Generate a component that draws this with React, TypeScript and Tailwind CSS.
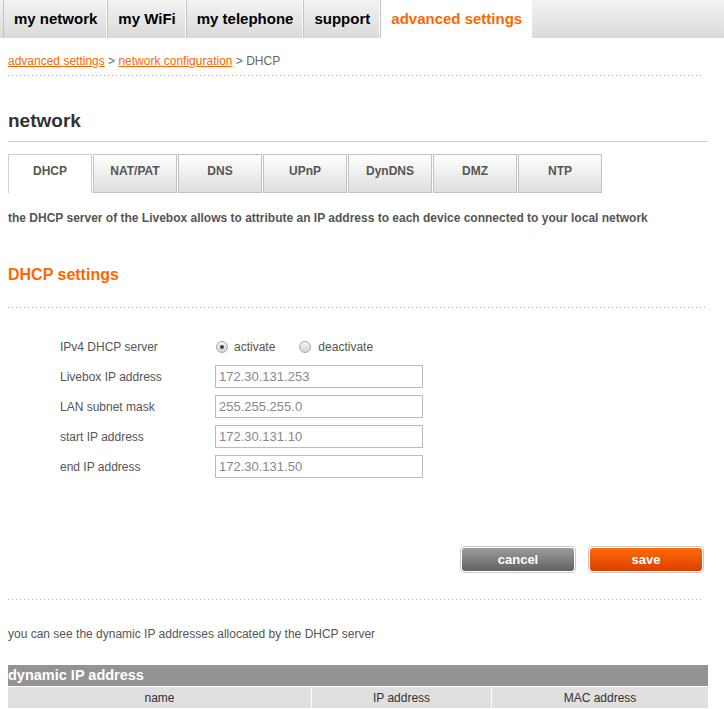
import React from "react";

const mainTabs = ["my network", "my WiFi", "my telephone", "support"];
const subTabs = ["DHCP", "NAT/PAT", "DNS", "UPnP", "DynDNS", "DMZ", "NTP"];

const fields = [
  { label: "Livebox IP address", value: "172.30.131.253" },
  { label: "LAN subnet mask", value: "255.255.255.0" },
  { label: "start IP address", value: "172.30.131.10" },
  { label: "end IP address", value: "172.30.131.50" },
];

const Dots = ({ className = "" }: { className?: string }) => (
  <div
    className={`h-px bg-[linear-gradient(to_right,#f0a070_1px,transparent_1px)] bg-[length:4px_1px] ${className}`}
  />
);

const Radio = ({ checked }: { checked?: boolean }) => (
  <span className="w-[12px] h-[12px] rounded-full border border-[#a8a8a8] bg-gradient-to-b from-[#f4f4f4] to-[#d4d4d4] flex items-center justify-center">
    {checked && <span className="w-[4px] h-[4px] rounded-full bg-[#444]" />}
  </span>
);

export default function App() {
  return (
    <div className="w-[724px] min-h-[709px] bg-white font-['Liberation_Sans',Arial,sans-serif] overflow-hidden">
      {/* top menu */}
      <nav className="flex h-[38px] bg-gradient-to-b from-[#f3f3f3] to-[#dadada]">
        <div className="flex ml-[3px] border-l border-[#c4c4c4]">
          {mainTabs.map((t) => (
            <div
              key={t}
              className="px-[10px] flex items-center text-[15px] font-bold text-black border-r border-[#c4c4c4] shadow-[inset_-1px_0_0_#fafafa]"
            >
              {t}
            </div>
          ))}
          <div className="w-[151px] bg-white flex items-center justify-center text-[15px] font-bold text-[#ff6600]">
            advanced settings
          </div>
        </div>
      </nav>

      <div className="px-[8px] w-[716px]">
        {/* breadcrumb */}
        <div className="mt-[16px] text-[12px] leading-[14px] text-[#666]">
          <span className="text-[#ff6600] underline">advanced settings</span>
          {" > "}
          <span className="text-[#ff6600] underline">network configuration</span>
          {" > DHCP"}
        </div>
        <Dots className="mt-[7px] w-[694px]" />

        <h1 className="mt-[34px] text-[19px] leading-[22px] font-bold text-[#333]">network</h1>
        <div className="mt-[9px] w-[700px] h-px bg-[#cfcfcf]" />

        {/* sub tabs */}
        <div className="mt-[12px] flex gap-px">
          {subTabs.map((t, i) => (
            <div
              key={t}
              className={
                i === 0
                  ? "w-[84px] h-[39px] pt-[9px] text-center text-[12px] leading-[14px] font-bold text-[#555] bg-white border-t border-l border-r border-[#cfcfcf]"
                  : "w-[84px] h-[39px] pt-[9px] text-center text-[12px] leading-[14px] font-bold text-[#555] bg-gradient-to-b from-white to-[#dedede] border border-[#c2c2c2]"
              }
            >
              {t}
            </div>
          ))}
        </div>

        <p className="mt-[18px] text-[12px] leading-[14px] font-bold text-[#555]">
          the DHCP server of the Livebox allows to attribute an IP address to each device connected to your local network
        </p>

        <h2 className="mt-[41px] text-[16px] leading-[18px] font-bold text-[#ff6600]">DHCP settings</h2>
        <Dots className="mt-[23px] w-[700px]" />

        {/* form */}
        <div className="mt-[27px] pl-[52px] text-[12px] text-[#555]">
          <div className="flex items-center h-[24px]">
            <span className="w-[155px]">IPv4 DHCP server</span>
            <span className="flex items-center gap-[6px] ml-[1px]">
              <Radio checked />
              activate
            </span>
            <span className="flex items-center gap-[7px] ml-[24px]">
              <Radio />
              deactivate
            </span>
          </div>
          <div className="mt-[6px] flex flex-col gap-[7px]">
            {fields.map((f) => (
              <div key={f.label} className="flex items-center h-[23px]">
                <span className="w-[155px]">{f.label}</span>
                <div className="w-[208px] h-[23px] border border-[#bcbcbc] px-[3px] flex items-center text-[13px] text-[#888]">
                  {f.value}
                </div>
              </div>
            ))}
          </div>
        </div>

        {/* buttons */}
        <div className="mt-[68px] flex justify-end gap-[12px] w-[696px]">
          <div className="w-[116px] h-[27px] rounded-[4px] border border-[#cacaca] bg-white p-px">
            <div className="h-full rounded-[3px] bg-gradient-to-b from-[#9c9c9c] to-[#636363] flex items-center justify-center text-[13px] font-bold text-white">
              cancel
            </div>
          </div>
          <div className="w-[116px] h-[27px] rounded-[4px] border border-[#cacaca] bg-white p-px">
            <div className="h-full rounded-[3px] bg-gradient-to-b from-[#ff6a06] to-[#dc3e00] flex items-center justify-center text-[13px] font-bold text-white">
              save
            </div>
          </div>
        </div>

        <Dots className="mt-[26px] w-[696px]" />

        <p className="mt-[27px] text-[12px] leading-[14px] text-[#555]">
          you can see the dynamic IP addresses allocated by the DHCP server
        </p>

        {/* table */}
        <div className="mt-[24px] w-[700px]">
          <div className="h-[21px] bg-[#939393] flex items-center text-[14.5px] font-bold text-white">
            dynamic IP address
          </div>
          <div className="grid grid-cols-[304px_180px_1fr] h-[22px] bg-[#e0e0e0] border-t border-white text-[12px] text-[#333]">
            <div className="flex items-center justify-center border-r border-white">name</div>
            <div className="flex items-center justify-center border-r border-white">IP address</div>
            <div className="flex items-center justify-center">MAC address</div>
          </div>
        </div>
      </div>
    </div>
  );
}
